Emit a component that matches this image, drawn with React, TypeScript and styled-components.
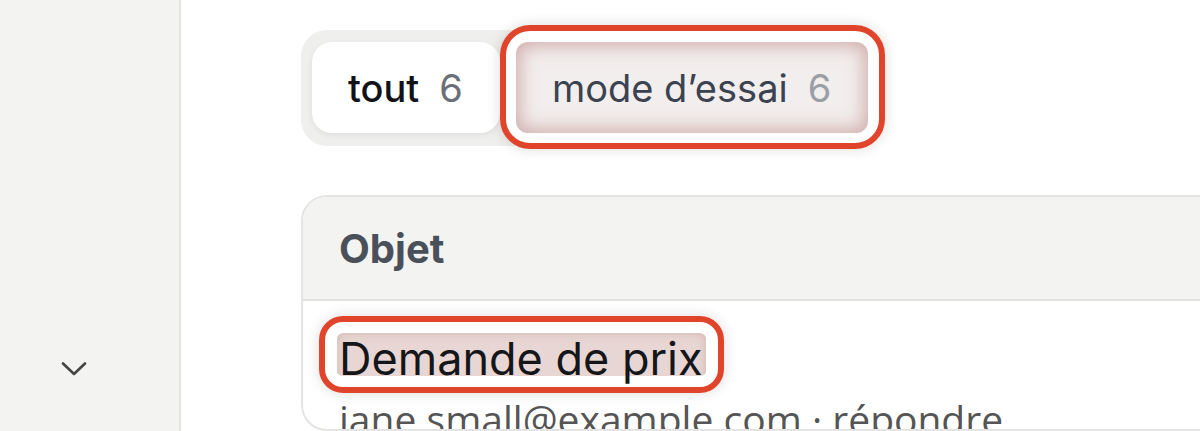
import React from "react";
import styled, { createGlobalStyle } from "styled-components";

const Global = createGlobalStyle`
  html, body { margin: 0; padding: 0; background: #ffffff; }
  body { font-family: Inter, "Noto Sans", sans-serif; overflow: hidden; }
  * { box-sizing: border-box; }
`;

const Page = styled.div`
  display: flex;
  width: 1200px;
  height: 431px;
  overflow: hidden;
`;

const Sidebar = styled.aside`
  flex: 0 0 181px;
  height: 100%;
  background: #f3f3f1;
  border-right: 2px solid #e3e3e1;
  display: flex;
  flex-direction: column;
  align-items: flex-start;
  justify-content: flex-end;
  padding: 0 0 50px 60px;
`;

const ChevronButton = styled.span`
  display: inline-flex;
  width: 28px;
  height: 24px;
  align-items: center;
  justify-content: center;
  color: #444444;
`;

const Main = styled.main`
  flex: 1 1 auto;
  min-width: 0;
  padding: 30px 0 0 120px;
  display: flex;
  flex-direction: column;
  gap: 49px;
`;

const TabBar = styled.div`
  align-self: flex-start;
  display: flex;
  gap: 16px;
  padding: 12px 11px 13px 11px;
  background: #efefee;
  border-radius: 26px;
`;

const Tab = styled.div<{ $active?: boolean }>`
  position: relative;
  height: 91px;
  display: flex;
  align-items: center;
  padding: 0 37px 0 36px;
  border-radius: ${(p) => (p.$active ? "20px" : "12px")};
  font-size: 38px;
  font-weight: ${(p) => (p.$active ? 500 : 400)};
  color: ${(p) => (p.$active ? "#111318" : "#3b4350")};
  background: ${(p) => (p.$active ? "#ffffff" : "#f2eeed")};
  box-shadow: ${(p) =>
    p.$active
      ? "0 2px 6px rgba(0,0,0,0.07)"
      : "inset 0 0 18px 4px rgba(196, 150, 145, 0.72)"};
`;

const Count = styled.span<{ $active?: boolean }>`
  margin-left: 20px;
  font-weight: 400;
  color: ${(p) => (p.$active ? "#6b7078" : "#9a9fa6")};
`;

const Ring = styled.span<{ $t: number; $r: number; $b: number; $l: number; $radius: number }>`
  position: absolute;
  top: ${(p) => -p.$t}px;
  right: ${(p) => -p.$r}px;
  bottom: ${(p) => -p.$b}px;
  left: ${(p) => -p.$l}px;
  border: 6px solid #e0452b;
  border-radius: ${(p) => p.$radius}px;
  box-shadow: inset 0 0 0 ${(p) => p.$t - 6}px #ffffff, 0 0 14px rgba(0, 0, 0, 0.14);
  pointer-events: none;
  z-index: -1;
`;

const Card = styled.section`
  width: 1000px;
  border: 2px solid #e4e4e2;
  border-radius: 26px;
  overflow: hidden;
  background: #ffffff;
`;

const CardHeader = styled.div`
  height: 104px;
  display: flex;
  align-items: center;
  padding-left: 36px;
  background: #f3f3f1;
  border-bottom: 2px solid #e2e2e0;
  font-size: 40px;
  font-weight: 700;
  color: #4a505a;
`;

const CardBody = styled.div`
  padding: 32px 0 0 34px;
  display: flex;
  flex-direction: column;
  align-items: flex-start;
  gap: 11px;
`;

const Subject = styled.span`
  position: relative;
  z-index: 0;
  display: inline-block;
  padding: 0 3px 0 2px;
  font-size: 45px;
  line-height: 52px;
  color: #15161a;
  background: #e7d6d3;
  border-radius: 6px;
  box-shadow: inset 0 0 8px rgba(196, 150, 145, 0.55);
`;

const Meta = styled.div`
  padding-left: 2px;
  font-family: "Open Sans", "Noto Sans", sans-serif;
  font-size: 39px;
  line-height: 46px;
  color: #555555;
  white-space: nowrap;
`;

const TabWrap = styled.div`
  position: relative;
  z-index: 0;
  display: flex;
`;

export default function App() {
  return (
    <>
      <Global />
      <Page>
        <Sidebar>
          <ChevronButton>
            <svg width="26" height="16" viewBox="0 0 26 16" fill="none">
              <path d="M2 2.5 L13 13 L24 2.5" stroke="currentColor" strokeWidth="2.6" strokeLinecap="round" strokeLinejoin="round" />
            </svg>
          </ChevronButton>
        </Sidebar>
        <Main>
          <TabBar>
            <Tab $active>
              tout<Count $active>6</Count>
            </Tab>
            <TabWrap>
              <Tab>
                <Ring $t={17} $r={17} $b={16} $l={16} $radius={30} />
                mode d’essai<Count>6</Count>
              </Tab>
            </TabWrap>
          </TabBar>
          <Card>
            <CardHeader>Objet</CardHeader>
            <CardBody>
              <Subject>
                <Ring $t={17} $r={18} $b={8} $l={18} $radius={24} />
                Demande de prix
              </Subject>
              <Meta>jane.small@example.com · répondre</Meta>
            </CardBody>
          </Card>
        </Main>
      </Page>
    </>
  );
}
